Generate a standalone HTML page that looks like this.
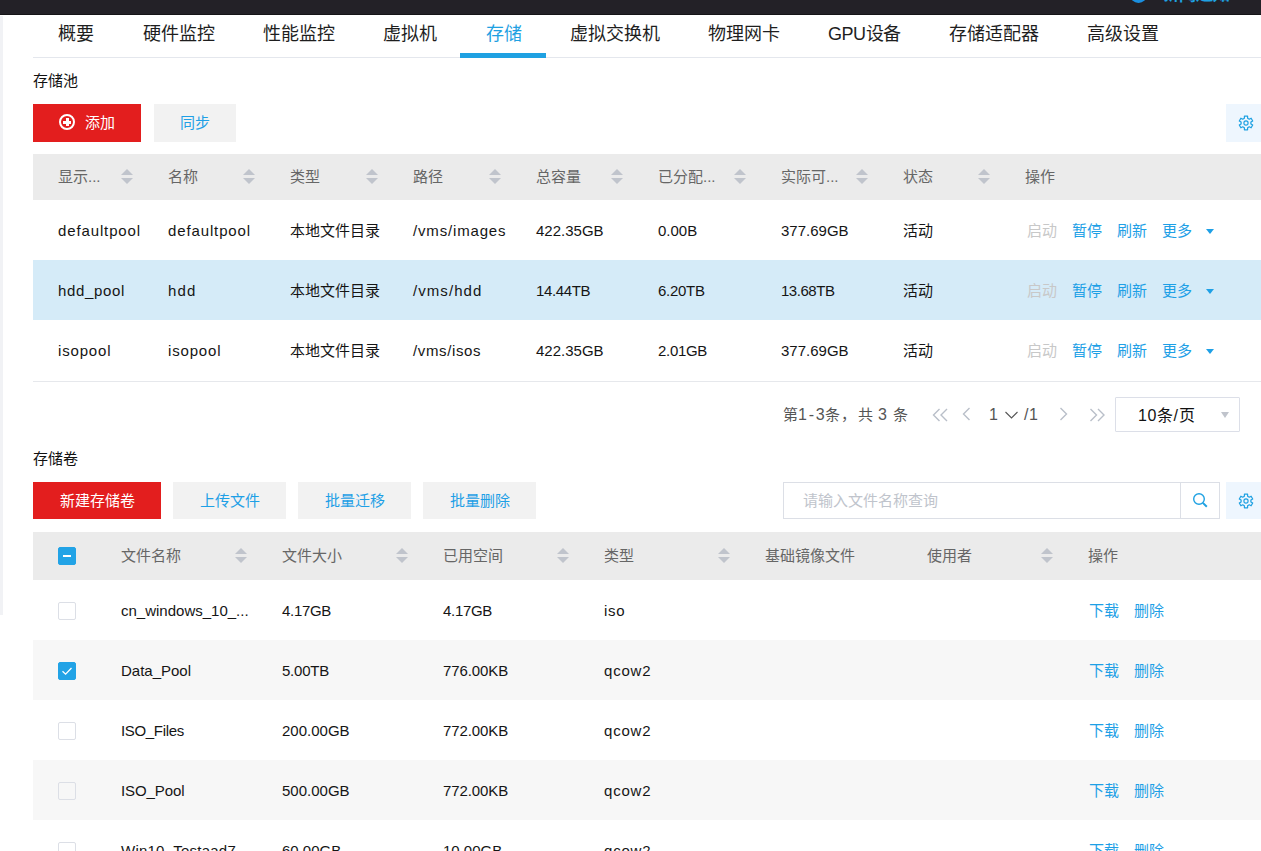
<!DOCTYPE html>
<html lang="zh-CN"><head><meta charset="utf-8">
<style>
*{box-sizing:border-box;margin:0;padding:0}
html,body{width:1261px;height:851px;overflow:hidden;background:#fff}
body{font-family:"Liberation Sans",sans-serif;font-size:15px;color:#222;position:relative}
.a{position:absolute;white-space:nowrap}
#top{left:0;top:0;width:1261px;height:15px;background:#232127;border-bottom:1px solid #151417}
#strip{left:0;top:16px;width:3px;height:599px;background:#f1f2f5}
.tab{top:22px;font-size:18px;line-height:24px;color:#1e1e1e}
#tabline{left:33px;top:57px;width:1228px;height:1px;background:#e4e7ed}
#tabul{left:460px;top:53px;width:86px;height:5px;background:#1fa1e2}
.title{font-size:15px;line-height:20px;color:#111}
.btn{height:38px;line-height:38px;font-size:15px;text-align:center}
.red{background:#e31e1e;color:#fff}
.gray{background:#f2f2f2;color:#1ea0e6}
.thead{left:33px;width:1228px;background:#ebebeb}
.th{font-size:15px;line-height:20px;color:#666}
.td{font-size:15px;line-height:20px;color:#151515}
.row .td{top:1px}
.sort{width:12px;height:15px}
.sort:before{content:"";position:absolute;left:0;top:0;border-left:6px solid transparent;border-right:6px solid transparent;border-bottom:6px solid #c0c4cc}
.sort:after{content:"";position:absolute;left:0;top:9px;border-left:6px solid transparent;border-right:6px solid transparent;border-top:6px solid #c0c4cc}
.row{left:33px;width:1228px;height:60px}
.lnk{color:#1ea0e6}
.dis{color:#c8c8c8}
.caret{width:0;height:0;border-left:4px solid transparent;border-right:4px solid transparent;border-top:5px solid #1ea0e6}
.cb{width:18px;height:18px;border:1px solid #dcdfe6;border-radius:2px;background:transparent}
.cbon{background:#22a3e6;border-color:#22a3e6}
</style></head><body>
<div class="a" id="top"></div>
<div class="a" id="strip"></div>
<div class="a" style="left:1130px;top:-14px;width:17px;height:17px;border-radius:50%;background:#1a8fe0"></div>
<div class="a" style="left:1162px;top:-14px;font-size:17px;line-height:18px;color:#1fa1e2;font-weight:bold">新闻通知</div>

<!-- tabs -->
<div class="a tab" style="left:58px">概要</div>
<div class="a tab" style="left:143px">硬件监控</div>
<div class="a tab" style="left:263px">性能监控</div>
<div class="a tab" style="left:383px">虚拟机</div>
<div class="a tab" style="left:486px;color:#1fa1e2">存储</div>
<div class="a tab" style="left:570px">虚拟交换机</div>
<div class="a tab" style="left:708px">物理网卡</div>
<div class="a tab" style="left:828px;letter-spacing:-0.5px">GPU设备</div>
<div class="a tab" style="left:949px">存储适配器</div>
<div class="a tab" style="left:1087px">高级设置</div>
<div class="a" id="tabline"></div>
<div class="a" id="tabul"></div>

<!-- storage pool -->
<div class="a title" style="left:33px;top:71px">存储池</div>
<div class="a btn red" style="left:33px;top:104px;width:108px"></div>
<div class="a btn gray" style="left:154px;top:104px;width:82px">同步</div>


<!-- add button content -->
<span class="a" style="left:59px;top:114px;width:16px;height:16px;border:2px solid #fff;border-radius:50%"></span>
<span class="a" style="left:63px;top:120.5px;width:8px;height:3px;background:#fff"></span>
<span class="a" style="left:65.5px;top:118px;width:3px;height:8px;background:#fff"></span>
<span class="a" style="left:85px;top:104px;line-height:38px;font-size:15px;color:#fff">添加</span>
<!-- gear -->
<div class="a" style="left:1226px;top:104px;width:35px;height:38px;background:#eef6fe"></div>
<svg class="a" width="18" height="18" viewBox="-9 -9 18 18" style="left:1237px;top:113.5px"><path d="M-1.63,-4.73 L-1.57,-6.82 L1.57,-6.82 L1.63,-4.73 L3.28,-3.77 L5.12,-4.77 L6.69,-2.05 L4.91,-0.95 L4.91,0.95 L6.69,2.05 L5.12,4.77 L3.28,3.77 L1.63,4.73 L1.57,6.82 L-1.57,6.82 L-1.63,4.73 L-3.28,3.77 L-5.12,4.77 L-6.69,2.05 L-4.91,0.95 L-4.91,-0.95 L-6.69,-2.05 L-5.12,-4.77 L-3.28,-3.77Z" fill="none" stroke="#1fa1e2" stroke-width="1.25" stroke-linejoin="round"/><circle r="2.1" fill="none" stroke="#1fa1e2" stroke-width="1.15"/></svg>
<div class="a thead" style="top:154px;height:46px;line-height:46px">
<span class="a th" style="left:25px;line-height:46px">显示...</span>
<span class="a sort" style="left:88px;top:15px"></span>
<span class="a th" style="left:135px;line-height:46px">名称</span>
<span class="a sort" style="left:210px;top:15px"></span>
<span class="a th" style="left:257px;line-height:46px">类型</span>
<span class="a sort" style="left:333px;top:15px"></span>
<span class="a th" style="left:380px;line-height:46px">路径</span>
<span class="a sort" style="left:456px;top:15px"></span>
<span class="a th" style="left:503px;line-height:46px">总容量</span>
<span class="a sort" style="left:578px;top:15px"></span>
<span class="a th" style="left:625px;line-height:46px">已分配...</span>
<span class="a sort" style="left:701px;top:15px"></span>
<span class="a th" style="left:748px;line-height:46px">实际可...</span>
<span class="a sort" style="left:823px;top:15px"></span>
<span class="a th" style="left:870px;line-height:46px">状态</span>
<span class="a sort" style="left:945px;top:15px"></span>
<span class="a th" style="left:992px;line-height:46px">操作</span>
</div>
<div class="a row" style="top:200px;background:#fff;line-height:60px">
<span class="a td" style="left:25px;line-height:60px;letter-spacing:0.87px">defaultpool</span>
<span class="a td" style="left:135px;line-height:60px;letter-spacing:0.87px">defaultpool</span>
<span class="a td" style="left:257px;line-height:60px">本地文件目录</span>
<span class="a td" style="left:380px;line-height:60px;letter-spacing:0.83px">/vms/images</span>
<span class="a td" style="left:503px;line-height:60px">422.35GB</span>
<span class="a td" style="left:625px;line-height:60px">0.00B</span>
<span class="a td" style="left:748px;line-height:60px">377.69GB</span>
<span class="a td" style="left:870px;line-height:60px">活动</span>
<span class="a td dis" style="left:994px;line-height:60px">启动</span>
<span class="a td lnk" style="left:1039px;line-height:60px">暂停</span>
<span class="a td lnk" style="left:1084px;line-height:60px">刷新</span>
<span class="a td lnk" style="left:1129px;line-height:60px">更多</span>
<span class="a caret" style="left:1173px;top:29px"></span>
</div>
<div class="a row" style="top:260px;background:#d5ebf8;line-height:60px">
<span class="a td" style="left:25px;line-height:60px;letter-spacing:0.66px">hdd_pool</span>
<span class="a td" style="left:135px;line-height:60px;letter-spacing:1.1px">hdd</span>
<span class="a td" style="left:257px;line-height:60px">本地文件目录</span>
<span class="a td" style="left:380px;line-height:60px;letter-spacing:1.07px">/vms/hdd</span>
<span class="a td" style="left:503px;line-height:60px;letter-spacing:-0.37px">14.44TB</span>
<span class="a td" style="left:625px;line-height:60px;letter-spacing:-0.28px">6.20TB</span>
<span class="a td" style="left:748px;line-height:60px;letter-spacing:-0.47px">13.68TB</span>
<span class="a td" style="left:870px;line-height:60px">活动</span>
<span class="a td dis" style="left:994px;line-height:60px">启动</span>
<span class="a td lnk" style="left:1039px;line-height:60px">暂停</span>
<span class="a td lnk" style="left:1084px;line-height:60px">刷新</span>
<span class="a td lnk" style="left:1129px;line-height:60px">更多</span>
<span class="a caret" style="left:1173px;top:29px"></span>
</div>
<div class="a row" style="top:320px;background:#fff;line-height:60px">
<span class="a td" style="left:25px;line-height:60px;letter-spacing:0.83px">isopool</span>
<span class="a td" style="left:135px;line-height:60px;letter-spacing:0.83px">isopool</span>
<span class="a td" style="left:257px;line-height:60px">本地文件目录</span>
<span class="a td" style="left:380px;line-height:60px;letter-spacing:0.62px">/vms/isos</span>
<span class="a td" style="left:503px;line-height:60px">422.35GB</span>
<span class="a td" style="left:625px;line-height:60px;letter-spacing:-0.3px">2.01GB</span>
<span class="a td" style="left:748px;line-height:60px">377.69GB</span>
<span class="a td" style="left:870px;line-height:60px">活动</span>
<span class="a td dis" style="left:994px;line-height:60px">启动</span>
<span class="a td lnk" style="left:1039px;line-height:60px">暂停</span>
<span class="a td lnk" style="left:1084px;line-height:60px">刷新</span>
<span class="a td lnk" style="left:1129px;line-height:60px">更多</span>
<span class="a caret" style="left:1173px;top:29px"></span>
</div>
<div class="a" style="left:33px;top:381px;width:1228px;height:1px;background:#e6e8ec"></div>
<!-- pagination -->
<span class="a" style="left:783px;top:404px;line-height:22px;font-size:15px;color:#555">第</span><span class="a" style="left:798px;top:404px;line-height:22px;font-size:16px;color:#555;letter-spacing:1.8px">1-3</span><span class="a" style="left:825px;top:404px;line-height:22px;font-size:15px;color:#555">条</span><span class="a" style="left:841px;top:404px;line-height:22px;font-size:15px;color:#555">，</span><span class="a" style="left:858px;top:404px;line-height:22px;font-size:15px;color:#555">共</span><span class="a" style="left:878px;top:404px;line-height:22px;font-size:16px;color:#555">3</span><span class="a" style="left:893px;top:404px;line-height:22px;font-size:15px;color:#555">条</span>
<svg class="a" width="20" height="16" viewBox="0 0 20 16" style="left:930px;top:407px"><path d="M9.5,2 L3.5,8 L9.5,14 M17,2 L11,8 L17,14" fill="none" stroke="#b9bfc9" stroke-width="1.4"/></svg>
<svg class="a" width="12" height="16" viewBox="0 0 12 16" style="left:960px;top:406px"><path d="M9.5,2 L3.5,8 L9.5,14" fill="none" stroke="#b9bfc9" stroke-width="1.4"/></svg>
<span class="a" style="left:989px;top:404px;line-height:22px;font-size:16px;color:#555">1</span>
<svg class="a" width="16" height="10" viewBox="0 0 16 10" style="left:1003px;top:410px"><path d="M2.5,2 L8.5,8 L14.5,2" fill="none" stroke="#555" stroke-width="1.1"/></svg>
<span class="a" style="left:1024px;top:404px;line-height:22px;font-size:16px;color:#555;letter-spacing:0.5px">/1</span>
<svg class="a" width="12" height="16" viewBox="0 0 12 16" style="left:1058px;top:406px"><path d="M2.5,2 L8.5,8 L2.5,14" fill="none" stroke="#b9bfc9" stroke-width="1.4"/></svg>
<svg class="a" width="20" height="16" viewBox="0 0 20 16" style="left:1088px;top:407px"><path d="M2.5,2 L8.5,8 L2.5,14 M10,2 L16,8 L10,14" fill="none" stroke="#b9bfc9" stroke-width="1.4"/></svg>
<div class="a" style="left:1115px;top:397px;width:125px;height:35px;border:1px solid #dcdfe8;border-radius:1px"></div>
<span class="a" style="left:1138px;top:405px;line-height:22px;font-size:16px;color:#111;letter-spacing:0.6px">10条/页</span>
<span class="a caret" style="left:1221px;top:412px;border-top-color:#c0c4cc;border-left-width:4px;border-right-width:4px;border-top-width:6px"></span>

<!-- storage volume -->
<div class="a title" style="left:33px;top:449px">存储卷</div>
<div class="a btn red" style="left:33px;top:482px;width:128px;height:37px;line-height:37px">新建存储卷</div>
<div class="a btn gray" style="left:173px;top:482px;width:113px;height:37px;line-height:37px">上传文件</div>
<div class="a btn gray" style="left:298px;top:482px;width:113px;height:37px;line-height:37px">批量迁移</div>
<div class="a btn gray" style="left:423px;top:482px;width:113px;height:37px;line-height:37px">批量删除</div>
<div class="a" style="left:783px;top:482px;width:437px;height:37px;border:1px solid #dcdfe6"></div>
<div class="a" style="left:1180px;top:482px;width:1px;height:37px;background:#dcdfe6"></div>
<span class="a" style="left:803px;top:482px;line-height:37px;font-size:15px;color:#c0c4cc">请输入文件名称查询</span>
<div class="a" style="left:1226px;top:482px;width:35px;height:37px;background:#eef6fe"></div>
<svg class="a" width="18" height="18" viewBox="-9 -9 18 18" style="left:1237px;top:491.5px"><path d="M-1.63,-4.73 L-1.57,-6.82 L1.57,-6.82 L1.63,-4.73 L3.28,-3.77 L5.12,-4.77 L6.69,-2.05 L4.91,-0.95 L4.91,0.95 L6.69,2.05 L5.12,4.77 L3.28,3.77 L1.63,4.73 L1.57,6.82 L-1.57,6.82 L-1.63,4.73 L-3.28,3.77 L-5.12,4.77 L-6.69,2.05 L-4.91,0.95 L-4.91,-0.95 L-6.69,-2.05 L-5.12,-4.77 L-3.28,-3.77Z" fill="none" stroke="#1fa1e2" stroke-width="1.25" stroke-linejoin="round"/><circle r="2.1" fill="none" stroke="#1fa1e2" stroke-width="1.15"/></svg>
<svg class="a" width="20" height="20" viewBox="0 0 20 20" style="left:1189px;top:489px"><circle cx="10" cy="10" r="5.3" fill="none" stroke="#1fa1e2" stroke-width="1.4"/><path d="M13.9,13.9 L17.8,17.8" stroke="#1fa1e2" stroke-width="2" stroke-linecap="butt"/></svg>
<div class="a thead" style="top:532px;height:48px">
<span class="a cb cbon" style="left:25px;top:15px"><i class="a" style="left:4px;top:7px;width:8px;height:2px;background:#fff"></i></span>
<span class="a th" style="left:88px;line-height:48px">文件名称</span>
<span class="a sort" style="left:202px;top:16px"></span>
<span class="a th" style="left:249px;line-height:48px">文件大小</span>
<span class="a sort" style="left:363px;top:16px"></span>
<span class="a th" style="left:410px;line-height:48px">已用空间</span>
<span class="a sort" style="left:524px;top:16px"></span>
<span class="a th" style="left:571px;line-height:48px">类型</span>
<span class="a sort" style="left:685px;top:16px"></span>
<span class="a th" style="left:732px;line-height:48px">基础镜像文件</span>
<span class="a th" style="left:894px;line-height:48px">使用者</span>
<span class="a sort" style="left:1008px;top:16px"></span>
<span class="a th" style="left:1055px;line-height:48px">操作</span>
</div>
<div class="a row" style="top:580px;background:#fff">
<span class="a cb" style="left:25px;top:22px"></span>
<span class="a td" style="left:88px;line-height:60px">cn_windows_10_...</span>
<span class="a td" style="left:249px;line-height:60px;letter-spacing:-0.3px">4.17GB</span>
<span class="a td" style="left:410px;line-height:60px;letter-spacing:-0.3px">4.17GB</span>
<span class="a td" style="left:571px;line-height:60px;letter-spacing:0.7px">iso</span>
<span class="a td lnk" style="left:1056px;line-height:60px">下载</span>
<span class="a td lnk" style="left:1101px;line-height:60px">删除</span>
</div>
<div class="a row" style="top:640px;background:#f7f7f7">
<span class="a cb cbon" style="left:25px;top:22px"><svg class="a" width="18" height="18" viewBox="0 0 18 18" style="left:-1px;top:-1px"><path d="M4.5,9.2 L7.6,12.2 L13.5,6" fill="none" stroke="#fff" stroke-width="1.3"/></svg></span>
<span class="a td" style="left:88px;line-height:60px">Data_Pool</span>
<span class="a td" style="left:249px;line-height:60px;letter-spacing:-0.24px">5.00TB</span>
<span class="a td" style="left:410px;line-height:60px;letter-spacing:-0.1px">776.00KB</span>
<span class="a td" style="left:571px;line-height:60px;letter-spacing:0.8px">qcow2</span>
<span class="a td lnk" style="left:1056px;line-height:60px">下载</span>
<span class="a td lnk" style="left:1101px;line-height:60px">删除</span>
</div>
<div class="a row" style="top:700px;background:#fff">
<span class="a cb" style="left:25px;top:22px"></span>
<span class="a td" style="left:88px;line-height:60px;letter-spacing:-0.33px">ISO_Files</span>
<span class="a td" style="left:249px;line-height:60px">200.00GB</span>
<span class="a td" style="left:410px;line-height:60px;letter-spacing:-0.1px">772.00KB</span>
<span class="a td" style="left:571px;line-height:60px;letter-spacing:0.8px">qcow2</span>
<span class="a td lnk" style="left:1056px;line-height:60px">下载</span>
<span class="a td lnk" style="left:1101px;line-height:60px">删除</span>
</div>
<div class="a row" style="top:760px;background:#f7f7f7">
<span class="a cb" style="left:25px;top:22px"></span>
<span class="a td" style="left:88px;line-height:60px;letter-spacing:-0.08px">ISO_Pool</span>
<span class="a td" style="left:249px;line-height:60px">500.00GB</span>
<span class="a td" style="left:410px;line-height:60px;letter-spacing:-0.1px">772.00KB</span>
<span class="a td" style="left:571px;line-height:60px;letter-spacing:0.8px">qcow2</span>
<span class="a td lnk" style="left:1056px;line-height:60px">下载</span>
<span class="a td lnk" style="left:1101px;line-height:60px">删除</span>
</div>
<div class="a row" style="top:820px;background:#fff">
<span class="a cb" style="left:25px;top:22px"></span>
<span class="a td" style="left:88px;line-height:60px;letter-spacing:0.23px">Win10_Testaad7</span>
<span class="a td" style="left:249px;line-height:60px">60.00GB</span>
<span class="a td" style="left:410px;line-height:60px">10.00GB</span>
<span class="a td" style="left:571px;line-height:60px;letter-spacing:0.8px">qcow2</span>
<span class="a td lnk" style="left:1056px;line-height:60px">下载</span>
<span class="a td lnk" style="left:1101px;line-height:60px">删除</span>
</div>
</body></html>
